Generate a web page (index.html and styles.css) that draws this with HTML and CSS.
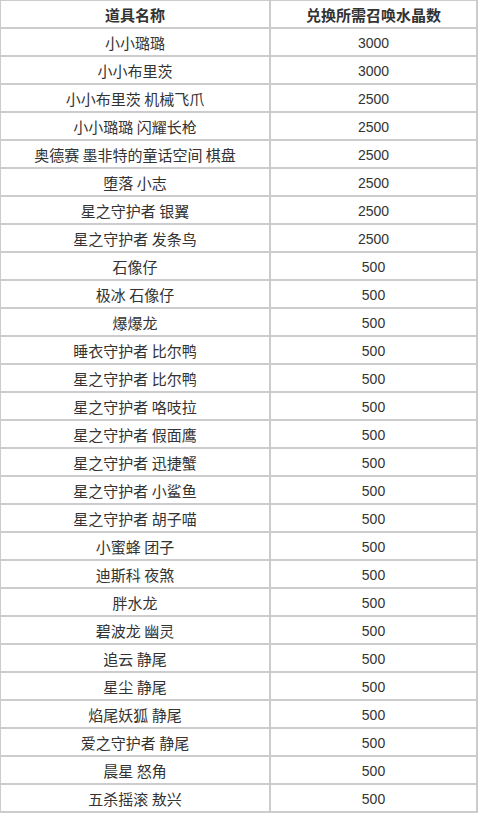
FILE: index.html
```html
<!DOCTYPE html>
<html lang="zh-CN">
<head>
<meta charset="utf-8">
<title>道具兑换</title>
<link rel="stylesheet" href="styles.css">
</head>
<body>
<table class="exchange">
  <thead>
    <tr><th class="name-col">道具名称</th><th>兑换所需召唤水晶数</th></tr>
  </thead>
  <tbody>
    <tr><td>小小璐璐</td><td class="num">3000</td></tr>
    <tr><td>小小布里茨</td><td class="num">3000</td></tr>
    <tr><td>小小布里茨 机械飞爪</td><td class="num">2500</td></tr>
    <tr><td>小小璐璐 闪耀长枪</td><td class="num">2500</td></tr>
    <tr><td>奥德赛 墨非特的童话空间 棋盘</td><td class="num">2500</td></tr>
    <tr><td>堕落 小志</td><td class="num">2500</td></tr>
    <tr><td>星之守护者 银翼</td><td class="num">2500</td></tr>
    <tr><td>星之守护者 发条鸟</td><td class="num">2500</td></tr>
    <tr><td>石像仔</td><td class="num">500</td></tr>
    <tr><td>极冰 石像仔</td><td class="num">500</td></tr>
    <tr><td>爆爆龙</td><td class="num">500</td></tr>
    <tr><td>睡衣守护者 比尔鸭</td><td class="num">500</td></tr>
    <tr><td>星之守护者 比尔鸭</td><td class="num">500</td></tr>
    <tr><td>星之守护者 咯吱拉</td><td class="num">500</td></tr>
    <tr><td>星之守护者 假面鹰</td><td class="num">500</td></tr>
    <tr><td>星之守护者 迅捷蟹</td><td class="num">500</td></tr>
    <tr><td>星之守护者 小鲨鱼</td><td class="num">500</td></tr>
    <tr><td>星之守护者 胡子喵</td><td class="num">500</td></tr>
    <tr><td>小蜜蜂 团子</td><td class="num">500</td></tr>
    <tr><td>迪斯科 夜煞</td><td class="num">500</td></tr>
    <tr><td>胖水龙</td><td class="num">500</td></tr>
    <tr><td>碧波龙 幽灵</td><td class="num">500</td></tr>
    <tr><td>追云 静尾</td><td class="num">500</td></tr>
    <tr><td>星尘 静尾</td><td class="num">500</td></tr>
    <tr><td>焰尾妖狐 静尾</td><td class="num">500</td></tr>
    <tr><td>爱之守护者 静尾</td><td class="num">500</td></tr>
    <tr><td>晨星 怒角</td><td class="num">500</td></tr>
    <tr><td>五杀摇滚 敖兴</td><td class="num">500</td></tr>
  </tbody>
</table>
</body>
</html>
```
FILE: styles.css
```css
html, body {
  margin: 0;
  padding: 0;
  background: #ffffff;
}

.exchange {
  width: 478px;
  table-layout: fixed;
  border-collapse: separate;
  border-spacing: 0;
  border-top: 1px solid #cccccf;
  border-left: 1px solid #cccccf;
  font-family: "Noto Sans CJK SC", "Noto Sans", sans-serif;
  font-size: 15px;
  color: #333333;
}

.exchange th,
.exchange td {
  box-sizing: border-box;
  height: 28px;
  padding: 2px 0 0 0;
  border-right: 2px solid #cccccf;
  border-bottom: 2px solid #cccccf;
  text-align: center;
  vertical-align: middle;
  line-height: 20px;
  white-space: nowrap;
}

.exchange th {
  font-weight: bold;
}

.exchange .name-col {
  width: 270px;
}

.exchange .num {
  font-family: "Liberation Sans", sans-serif;
  font-size: 14px;
}
```
